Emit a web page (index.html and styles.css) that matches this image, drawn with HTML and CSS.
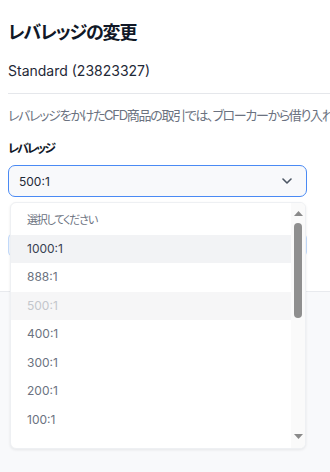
FILE: index.html
```html
<!DOCTYPE html>
<html lang="ja">
<head>
<meta charset="utf-8">
<link rel="stylesheet" href="styles.css">
</head>
<body>
<div class="page">
  <section class="top">
    <h1 class="title">レバレッジの変更</h1>
    <p class="account">Standard (23823327)</p>
    <hr class="divider">
    <p class="desc">レバレッジをかけたCFD商品の取引では、ブローカーから借り入れる資金を使って、より大きなポジションを保有することができます。</p>
    <label class="label">レバレッジ</label>
    <div class="select">
      <span class="select-value">500:1</span>
      <svg class="chevron" width="10" height="6" viewBox="0 0 10 6"><path d="M1 1l4 4 4-4" fill="none" stroke="#4b5563" stroke-width="1.6" stroke-linecap="round" stroke-linejoin="round"/></svg>
    </div>
    <div class="info"></div>
  </section>
  <section class="footer"></section>

  <div class="dropdown">
    <ul class="options">
      <li class="opt placeholder">選択してください</li>
      <li class="opt hover">1000:1</li>
      <li class="opt">888:1</li>
      <li class="opt disabled">500:1</li>
      <li class="opt">400:1</li>
      <li class="opt">300:1</li>
      <li class="opt">200:1</li>
      <li class="opt">100:1</li>
    </ul>
    <div class="scrollbar">
      <svg class="arrow" width="9" height="5" viewBox="0 0 9 5"><path d="M0 5L4.5 0 9 5z" fill="#8a8a8a"/></svg>
      <div class="track"><div class="thumb"></div></div>
      <svg class="arrow" width="9" height="5" viewBox="0 0 9 5"><path d="M0 0L4.5 5 9 0z" fill="#8a8a8a"/></svg>
    </div>
  </div>
</div>
</body>
</html>
```
FILE: styles.css
```css
html, body {
  margin: 0;
  padding: 0;
  height: 100%;
  overflow: hidden;
  background: #ffffff;
}
body {
  font-family: Inter, "Noto Sans CJK JP", sans-serif;
  font-feature-settings: "palt" 1;
  color: #1f2937;
}
.page {
  position: relative;
  width: 600px;
  min-height: 472px;
  display: flex;
  flex-direction: column;
}
.top {
  padding: 21px 8px 0 8px;
  display: flex;
  flex-direction: column;
}
.title {
  margin: 0;
  font-size: 18px;
  line-height: 24px;
  font-weight: 700;
  letter-spacing: -1.2px;
  color: #111827;
}
.account {
  margin: 16px 0 0 0;
  font-size: 14px;
  line-height: 20px;
  color: #1f2937;
}
.divider {
  margin: 12px 0 0 0;
  border: 0;
  border-top: 1px solid #e5e7eb;
  height: 0;
}
.desc {
  margin: 11px 0 0 0;
  font-size: 13px;
  line-height: 20px;
  letter-spacing: -1.3px;
  color: #6b7280;
  white-space: nowrap;
}
.label {
  margin-top: 16px;
  font-size: 12px;
  line-height: 16px;
  font-weight: 700;
  letter-spacing: -2px;
  color: #111827;
}
.select {
  margin-top: 8px;
  width: 299px;
  height: 32px;
  box-sizing: border-box;
  border: 1px solid #4a8af4;
  border-radius: 7px;
  background: #f8f9fb;
  display: flex;
  align-items: center;
  justify-content: space-between;
  padding: 0 14px 0 10px;
}
.select-value {
  font-size: 12px;
  color: #1f2937;
}
.info {
  margin-top: 37px;
  width: 299px;
  height: 22px;
  box-sizing: border-box;
  border: 1px solid #c4dbfb;
  border-radius: 4px;
  background: #f3f8ff;
}
.footer {
  margin-top: 35px;
  flex: 1;
  border-top: 1px solid #e8eaee;
  background: #f8f9fb;
}
.dropdown {
  position: absolute;
  left: 10px;
  top: 202px;
  width: 296px;
  height: 247px;
  box-sizing: border-box;
  background: #ffffff;
  border: 1px solid #eef0f3;
  border-radius: 6px;
  box-shadow: 0 1px 3px rgba(0,0,0,0.08);
  display: flex;
  overflow: hidden;
}
.options {
  list-style: none;
  margin: 0;
  padding: 3px 0 0 0;
  flex: 1;
  overflow: hidden;
}
.opt {
  height: 28.5px;
  line-height: 28.5px;
  padding-left: 16px;
  font-size: 12px;
  color: #6b7280;
}
.opt.placeholder {
  font-size: 11px;
  letter-spacing: -1.2px;
  color: #6b7280;
}
.opt.hover {
  background: #f2f3f5;
  color: #374151;
}
.opt.disabled {
  background: #f6f6f7;
  color: #c3c6cc;
}
.scrollbar {
  width: 14px;
  background: #fafafa;
  display: flex;
  flex-direction: column;
  align-items: center;
  padding: 8px 0 9px 0;
}
.arrow {
  display: block;
}
.track {
  flex: 1;
  width: 100%;
  display: flex;
  justify-content: center;
  padding-top: 7px;
}
.thumb {
  width: 8px;
  height: 95px;
  border-radius: 4px;
  background: #8f8f8f;
}
```
